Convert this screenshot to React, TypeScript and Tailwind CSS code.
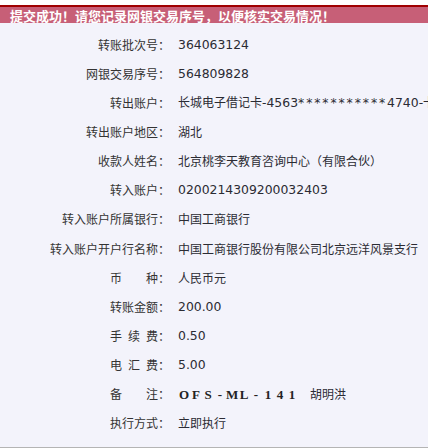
import React from 'react'

interface Row {
  label: string
  value: React.ReactNode
}

const Num = ({ children }: { children: React.ReactNode }) => (
  <span className="font-['DejaVu_Sans','Noto_Sans_CJK_SC',sans-serif] text-[12.4px]">{children}</span>
)

// remark code is drawn as full-width bold serif cells
function Remark() {
  const code = 'OFS-ML-141'.split('')
  return (
    <span className="inline-flex items-center">
      {code.map((c, i) => (
        <span
          key={i}
          className="inline-block w-[12px] text-center font-bold text-[13px] text-[#222] font-['Liberation_Serif',serif]"
        >
          {c === '-' ? '-' : c}
        </span>
      ))}
      <span className="inline-block w-[12px]" />
      <span>胡明洪</span>
    </span>
  )
}

const rows: Row[] = [
  { label: '转账批次号：', value: <Num>364063124</Num> },
  { label: '网银交易序号：', value: <Num>564809828</Num> },
  {
    label: '转出账户：',
    value: (
      <span>
        长城电子借记卡
        <Num>
          -4563<span className="tracking-[1.9px]">***********</span>4740-
        </Num>
        卡
      </span>
    ),
  },
  { label: '转出账户地区：', value: '湖北' },
  { label: '收款人姓名：', value: '北京桃李天教育咨询中心（有限合伙）' },
  { label: '转入账户：', value: <Num>0200214309200032403</Num> },
  { label: '转入账户所属银行：', value: '中国工商银行' },
  { label: '转入账户开户行名称：', value: '中国工商银行股份有限公司北京远洋风景支行' },
  { label: '币\u3000\u3000种：', value: '人民币元' },
  { label: '转账金额：', value: <Num>200.00</Num> },
  { label: '手\u2002续\u2002费：', value: <Num>0.50</Num> },
  { label: '电\u2002汇\u2002费：', value: <Num>5.00</Num> },
  { label: '备\u3000\u3000注：', value: <Remark /> },
  { label: '执行方式：', value: '立即执行' },
]

export default function App() {
  return (
    <div className="w-[428px] h-[448px] overflow-hidden bg-[#f3f3fb] flex flex-col font-['Noto_Sans_CJK_SC','Noto_Sans',sans-serif]">
      <div className="h-[5px] bg-white shrink-0" />
      <div className="h-[18px] shrink-0 bg-[#c75f77] border-t-2 border-[#a00000] flex items-center pl-[10px]">
        <span className="text-white font-bold text-[13px] leading-none whitespace-nowrap">
          提交成功！请您记录网银交易序号，以便核实交易情况！
        </span>
      </div>

      <div className="flex-1 pt-[7px] flex flex-col">
        {rows.map((r, i) => (
          <div key={i} className="grid grid-cols-[170px_1fr] h-[29.15px] items-center text-[12px] text-[#333]">
            <div className="text-right whitespace-nowrap">{r.label}</div>
            <div className="pl-[8px] whitespace-nowrap text-[#2b2b33]">{r.value}</div>
          </div>
        ))}
      </div>

      <div className="h-px bg-[#b4b4b4] shrink-0" />
    </div>
  )
}
